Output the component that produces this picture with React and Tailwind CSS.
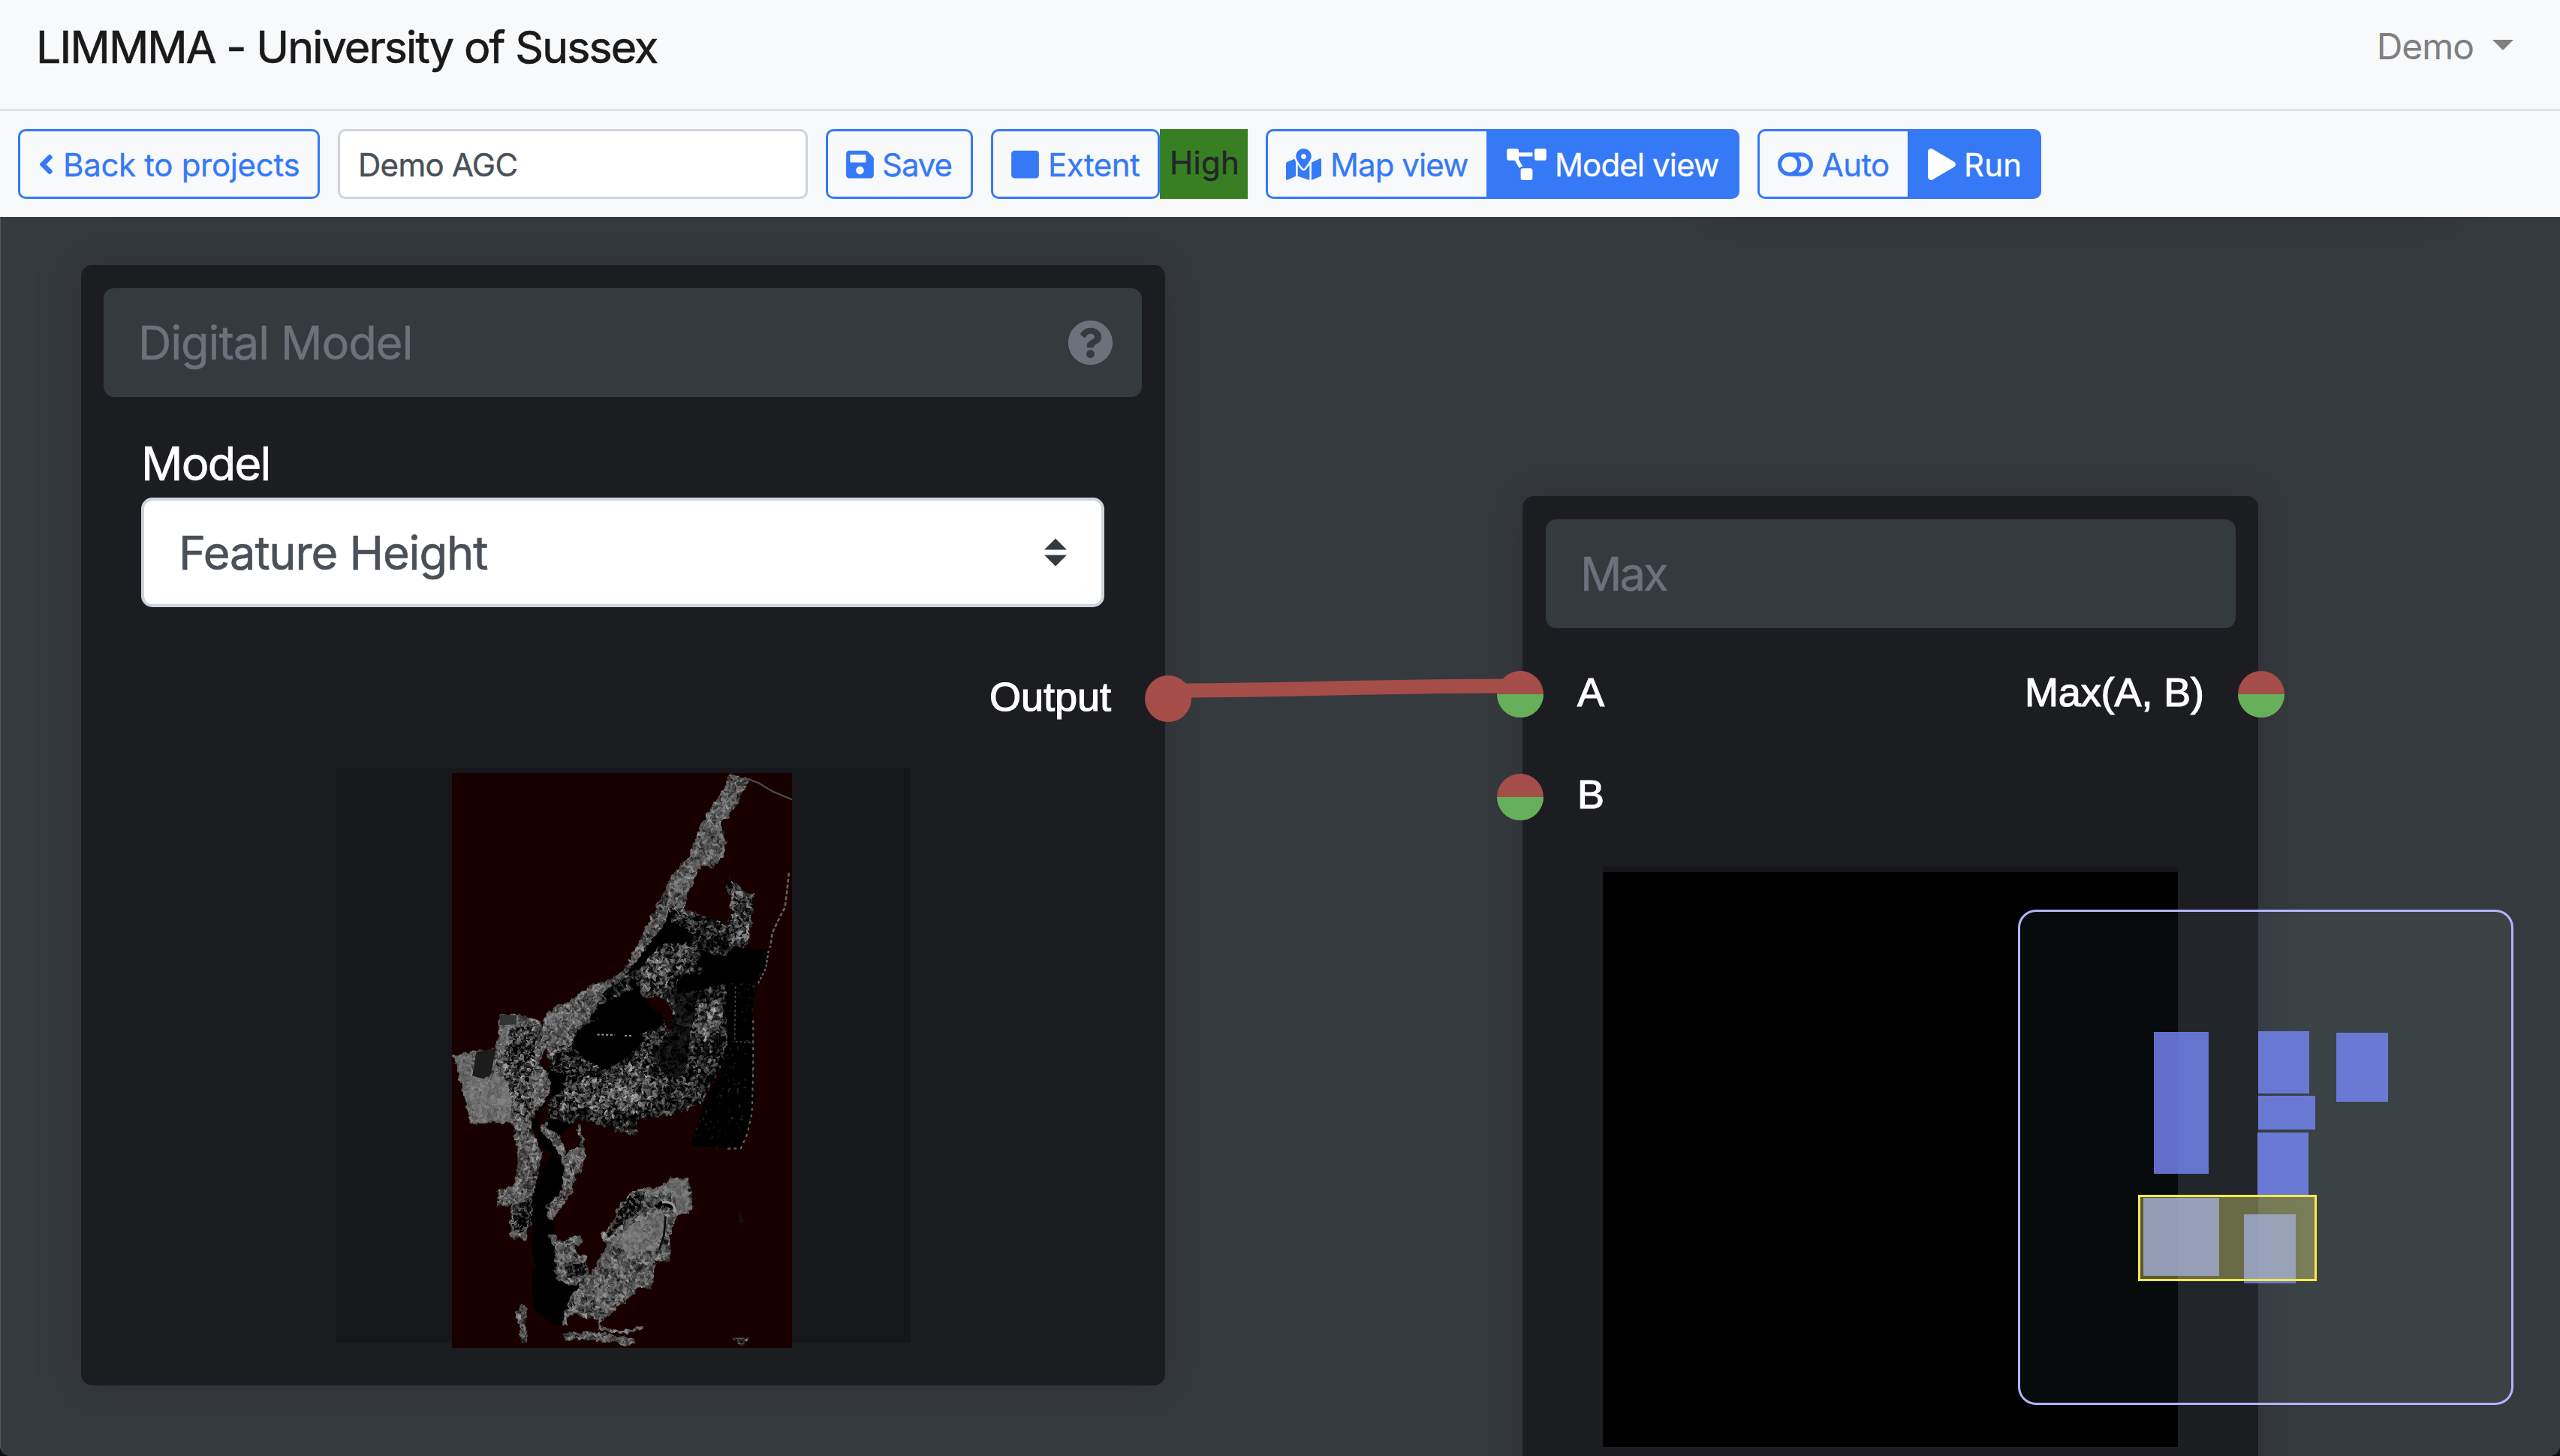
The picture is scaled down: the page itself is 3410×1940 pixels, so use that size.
import React from "react";
import {
  FaAngleLeft,
  FaSave,
  FaSquare,
  FaMapMarkedAlt,
  FaProjectDiagram,
  FaToggleOff,
  FaPlay,
  FaQuestionCircle,
} from "react-icons/fa";

function ToolButton({ icon: Icon, iconClass, filled, className, children, textClass }) {
  return (
    <button
      className={`flex h-[93px] shrink-0 items-center gap-[12px] border-[3px] border-[#3579f6] pl-[24px] text-[42px] leading-[63px] whitespace-nowrap ${
        filled ? "bg-[#3579f6] text-white" : "text-[#3579f6]"
      } ${className}`}
    >
      <Icon className={`h-[42px] shrink-0 ${iconClass}`} />
      <span className={`pt-[2px] [-webkit-text-stroke:0.3px_currentColor] ${textClass}`}>{children}</span>
    </button>
  );
}

function Socket({ split, className = "" }) {
  return (
    <span className={`flex h-[62px] w-[62px] shrink-0 flex-col overflow-hidden rounded-full bg-[#a54d49] ${className}`}>
      {split && <span className="mt-[31px] h-[31px] w-full bg-[#67b05b]" />}
    </span>
  );
}

function Node({ title, help, className, titleClass, children }) {
  return (
    <section
      className={`absolute flex flex-col rounded-[15px] bg-[#1c1d21] shadow-[0_0_50px_rgba(44,43,48,0.7)] ${className}`}
    >
      <header className="flex h-[145px] shrink-0 items-center justify-between rounded-[14px] bg-[#353a3e] pr-[38px] pl-[46px] text-[61.4px] leading-[92px] text-[#6c727b]">
        <span className={`[-webkit-text-stroke:0.5px_#6c727b] ${titleClass}`}>{title}</span>
        {help && <FaQuestionCircle className="h-[61px] w-[61px]" />}
      </header>
      {children}
    </section>
  );
}

const SOCKET_LABEL =
  "font-['Liberation_Sans',sans-serif] text-[54px] leading-[80px] text-white [-webkit-text-stroke:1.2px_white]";

const RIVER_BANKS = [
  // northern strip
  "1058,55 1108,68 1090,100 1055,160 1038,165 1040,190 1050,215 1040,255 1012,278 985,272 968,305 950,340 940,375 905,375 890,415 862,445 840,480 815,515 800,535 765,550 730,580 712,615 690,640 665,660 655,700 625,700 600,740 580,690 582,640 605,612 660,590 700,557 755,542 790,520 805,490 830,445 862,385 895,325 915,290 950,255 965,225 980,180 1015,125 1045,90",
  // western fields
  "350,722 463,704 470,650 470,625 515,627 575,640 590,700 570,740 600,770 600,810 570,850 550,880 560,920 580,955 570,1000 555,1060 552,1130 540,1120 540,1165 500,1155 500,1080 466,1082 466,1042 505,1035 520,980 515,940 502,882 400,886 372,788",
  // east bank by the bend
  "590,880 620,905 640,960 670,940 690,940 692,955 680,1000 665,1005 655,1050 625,1090 605,1112 588,1110 586,1085 610,1065 632,1040 636,990 620,950 590,925 575,900",
  "668,888 676,890 688,938 680,940",
  "600,1140 627,1165 678,1148 680,1170 665,1175 668,1195 692,1197 697,1245 670,1268 640,1270 615,1255 610,1180 596,1160",
  // south-east hill
  "905,1014 950,1016 963,1075 962,1092 922,1108 905,1150 905,1214 868,1210 858,1278 830,1275 770,1325 735,1352 700,1345 650,1338 640,1362 628,1358 650,1295 680,1262 712,1232 745,1170 728,1150 768,1115 766,1095 800,1052 830,1040 905,1042",
  // southern fragments
  "525,1312 541,1325 538,1360 542,1405 526,1407 522,1360 508,1345",
  "630,1384 700,1380 760,1386 815,1394 815,1405 795,1414 765,1404 700,1398 637,1400",
  "720,1345 730,1350 728,1368 790,1378 840,1364 838,1372 800,1385 722,1375",
];

const PASTURE = [
  "352,724 400,716 402,772 428,778 463,768 495,785 502,840 495,882 402,884 374,788",
  "480,655 512,652 505,700 475,720",
  "800,1130 880,1090 900,1110 870,1180 800,1200 770,1170",
  "910,1020 948,1020 960,1088 925,1100 915,1050 850,1055 845,1045",
];

const SUBURBS = [
  "940,375 1055,412 1058,350 1046,325 1058,300 1095,335 1120,342 1112,420 1098,468 1060,475 1045,560 1050,700 1030,760 990,835 925,862 825,878 815,917 700,880 670,875 640,890 590,870 600,830 640,800 600,760 590,700 650,640 720,570 790,535 860,440 905,375",
  "500,660 560,650 570,720 545,790 560,850 520,880 490,800 480,720",
  "515,1080 552,1060 550,1128 520,1150 502,1120",
  "805,1055 840,1045 830,1090 790,1120 740,1160 768,1115 775,1090",
  "640,1225 690,1215 690,1245 640,1255",
];

const GROVES = [
  "640,800 700,770 760,790 800,740 850,710 860,770 900,790 830,860 760,870 690,850 620,860",
  "830,520 870,470 960,460 950,500 900,550 870,585 835,580",
  "980,600 1035,590 1040,660 990,690 965,650",
  "1060,310 1115,345 1105,460 1060,450 1062,370",
  "500,660 560,650 570,720 545,790 560,850 520,880 490,800 480,720",
];

const OPEN_GROUND = [
  "1060,470 1155,472 1150,515 1125,560 1115,620 1120,700 1120,830 1105,900 1085,946 958,938 990,840 1035,760 1050,680 1042,560",
];

const TOWN = ["915,560 980,575 960,640 950,740 930,780 890,770 860,720 885,690 905,665 915,620"];

const WATER = [
  "900,395 950,430 970,440 960,458 900,458 868,470 840,505 805,530 790,530 820,500 850,460 885,425",
  "822,556 838,590 890,625 886,655 835,670 830,700 790,730 745,760 690,735 662,705 668,660 720,640 722,605 780,580",
  "985,475 1045,490 1070,465 1145,475 1130,550 1040,555 960,575 920,560 935,530 990,528 972,500",
  "575,740 620,770 640,800 600,825 570,870 572,900 610,935 636,985 632,1035 590,1085 592,1112 610,1115 612,1145 596,1150 610,1180 615,1255 650,1270 680,1262 650,1300 628,1364 608,1362 556,1322 553,1250 562,1220 552,1190 555,1060 580,980 604,960 570,930 552,885 570,850 598,820 605,790",
  "600,875 665,885 620,915 590,895",
  "862,1076 905,1068 918,1085 900,1084 870,1086",
];

const NO_DATA = ["840,590 870,583 895,592 912,618 905,665 892,650 890,625 868,618"];

function Polys({ list, ...rest }) {
  return (
    <g {...rest}>
      {list.map((p) => (
        <polygon key={p} points={p} />
      ))}
    </g>
  );
}

const CELL = 3.82;
const TILE = 84;

// Seeded cells of height values, grouped into one path for each grey level.
function heightCells(seed, mean, fine, coarse) {
  let s = seed;
  const rnd = () => {
    s = (s * 1664525 + 1013904223) % 4294967296;
    return s / 4294967296;
  };
  const half = TILE / 2;
  const sixth = TILE / 6;
  const mid = Array.from({ length: half * half }, rnd);
  const big = Array.from({ length: sixth * sixth }, rnd);
  const levels = {};
  for (let y = 0; y < TILE; y++) {
    for (let x = 0; x < TILE; x++) {
      const m = mid[(y >> 1) * half + (x >> 1)];
      const b = big[Math.floor(y / 6) * sixth + Math.floor(x / 6)];
      const v = mean + fine * (rnd() * 0.5 + m * 0.5 - 0.5) + coarse * (b - 0.5);
      const level = Math.round(Math.max(2, Math.min(225, v)) / 12) * 12;
      levels[level] = (levels[level] || "") + `M${x} ${y}h1v1h-1z`;
    }
  }
  return Object.entries(levels);
}

function Cover({ id, seed, mean, fine, coarse }) {
  return (
    <pattern id={id} width={TILE} height={TILE} patternUnits="userSpaceOnUse" patternTransform={`translate(350 53) scale(${CELL})`}>
      <rect width={TILE} height={TILE} fill="#050505" />
      {heightCells(seed, mean, fine, coarse).map(([v, d]) => (
        <path key={v} d={d} fill={`rgb(${v},${v},${v})`} shapeRendering="crispEdges" />
      ))}
    </pattern>
  );
}

function HeightRaster() {
  return (
    <svg viewBox="350 53 866 1365" preserveAspectRatio="none" className="block h-[766px] w-[453px] -translate-x-[1px] bg-[#180000]">
      <defs>
        <Cover id="canopy" seed={41} mean={88} fine={150} coarse={18} />
        <Cover id="pasture" seed={17} mean={108} fine={60} coarse={12} />
        <Cover id="suburb" seed={93} mean={25} fine={230} coarse={40} />
        <Cover id="grove" seed={58} mean={65} fine={240} coarse={45} />
        <Cover id="field" seed={71} mean={-62} fine={215} coarse={16} />
        <Cover id="town" seed={29} mean={12} fine={60} coarse={24} />
        <filter id="ragged" x="-0.02" y="-0.02" width="1.04" height="1.04">
          <feTurbulence type="fractalNoise" baseFrequency="0.07" numOctaves="2" seed="5" result="n" />
          <feDisplacementMap in="SourceGraphic" in2="n" scale="16" xChannelSelector="R" yChannelSelector="G" />
        </filter>
      </defs>
      <Polys list={OPEN_GROUND} fill="url(#field)" />
      <g filter="url(#ragged)">
        <Polys list={SUBURBS} fill="url(#suburb)" />
        <Polys list={GROVES} fill="url(#grove)" />
        <Polys list={TOWN} fill="url(#town)" />
        <Polys list={RIVER_BANKS} fill="url(#canopy)" />
        <Polys list={PASTURE} fill="url(#pasture)" />
        <Polys list={GROVES.slice(4)} fill="url(#grove)" />
        <Polys list={SUBURBS.slice(2)} fill="url(#suburb)" />
        <Polys list={WATER} fill="#020202" />
      </g>
      <Polys list={NO_DATA} fill="#180000" />
      <g fill="none" stroke="#4c4c4c" strokeWidth="4">
        <path d="M1100 66 L1130 76 L1165 96 L1216 116" />
        <path d="M1208 290 L1203 335 L1198 372 L1185 395 L1166 432 L1160 468" stroke="#606060" strokeDasharray="9 5" strokeWidth="5" />
        <path d="M1156 475 L1150 515 L1128 556" stroke="#666" strokeDasharray="6 5" />
        <path d="M1117 640 L1117 760 L1114 860 L1102 910 L1086 944 L1050 945" stroke="#666" strokeDasharray="7 9" />
        <path d="M1072 560 L1070 690 L1118 694" strokeDasharray="5 6" strokeWidth="3" />
        <path d="M720 674 L765 675 M790 677 L808 677" strokeDasharray="6 5" stroke="#888" />
      </g>
      <polygon points="402,772 412,716 463,706 448,772 425,778" fill="#1c1c1c" />
      <polygon points="472,627 515,628 514,650 471,652" fill="#333" />
      <path d="M885 1072 Q918 1068 918 1095" fill="none" stroke="#999" strokeWidth="6" />
      <path d="M894 1105 L890 1150 L878 1185" fill="none" stroke="#0a0a0a" strokeWidth="5" />
      <polygon points="1081,1090 1094,1120 1080,1122" fill="#111" />
      <polygon points="1061,1394 1107,1394 1090,1416" fill="url(#suburb)" />
    </svg>
  );
}

function RasterPreview({ children, className }) {
  return <div className={`flex h-[766px] w-[766px] shrink-0 justify-center self-center bg-[#15171a] pt-[7px] ${className}`}>{children}</div>;
}

const MINI_NODES = [
  "left-[178px] top-[160px] w-[73px] h-[189px]",
  "left-[317px] top-[159px] w-[68px] h-[83px]",
  "left-[317px] top-[245px] w-[76px] h-[45px]",
  "left-[316px] top-[294px] w-[68px] h-[83px]",
  "left-[421px] top-[161px] w-[69px] h-[92px]",
  "left-[164px] top-[381px] w-[101px] h-[104px]",
  "left-[298px] top-[403px] w-[69px] h-[92px]",
];

function MiniMap() {
  return (
    <aside className="absolute top-[923px] left-[2687px] h-[660px] w-[660px] rounded-[24px] border-[3px] border-[#b1b4fa] bg-[rgba(155,220,245,0.05)]">
      {MINI_NODES.map((c) => (
        <span key={c} className={`absolute bg-[rgba(115,132,240,0.83)] ${c}`} />
      ))}
      <span className="absolute top-[377px] left-[157px] h-[115px] w-[238px] border-[3px] border-[#fce84f] bg-[rgba(255,251,128,0.32)] bg-clip-padding" />
    </aside>
  );
}

export default function App() {
  return (
    <div className="flex h-[1940px] w-[3410px] flex-col overflow-hidden bg-[#0c130e] font-[Inter,sans-serif]">
      <nav className="h-[148px] shrink-0 border-b-[3px] border-[#e1e2e8] bg-[#f8f9fb]">
        <div className="flex h-[124px] items-center justify-between pr-[62px] pl-[48px]">
          <h1 className="pt-[2px] text-[59px] leading-[90px] tracking-[-1.87px] text-[#1a1a1a] [-webkit-text-stroke:0.7px_#1a1a1a]">
            LIMMMA - University of Sussex
          </h1>
          <div className="flex items-center gap-[25px] text-[48px] leading-[72px] tracking-[-1.06px] text-[#7f7f7f]">
            <span>Demo</span>
            <svg viewBox="0 0 28 14" className="h-[14px] w-[28px] -translate-y-[2px]" fill="currentColor">
              <path d="M0 0H28L14 14Z" />
            </svg>
          </div>
        </div>
      </nav>

      <div className="flex h-[141px] shrink-0 items-center bg-[#f8f9fb] pl-[24px]">
        <ToolButton icon={FaAngleLeft} iconClass="w-[21px]" className="w-[402px] rounded-[10px]" textClass="tracking-[-0.32px]">
          Back to projects
        </ToolButton>
        <div className="ml-[24px] flex h-[93px] w-[626px] items-center rounded-[10px] border-[3px] border-[#ced4d9] bg-white pt-[2px] pl-[24px] text-[42px] leading-[63px] tracking-[-0.71px] text-[#495057] [-webkit-text-stroke:0.4px_#495057]">
          Demo AGC
        </div>
        <ToolButton icon={FaSave} iconClass="w-[37px]" className="ml-[24px] w-[196px] rounded-[10px]" textClass="-ml-[1px] tracking-[-1.07px]">
          Save
        </ToolButton>
        <ToolButton icon={FaSquare} iconClass="w-[37px]" className="ml-[24px] w-[225px] rounded-[10px]" textClass="tracking-[-0.52px]">
          Extent
        </ToolButton>
        <div className="flex h-[93px] w-[117px] items-center bg-[#387e22] pb-[4px] pl-[13px] text-[42px] leading-[63px] tracking-[0.29px] text-[#212529] [-webkit-text-stroke:0.4px_#212529]">
          High
        </div>
        <ToolButton icon={FaMapMarkedAlt} iconClass="w-[47px]" className="ml-[24px] w-[294px] rounded-l-[10px] border-r-0" textClass="tracking-[-0.94px]">
          Map view
        </ToolButton>
        <ToolButton icon={FaProjectDiagram} iconClass="w-[53px]" filled className="w-[337px] rounded-r-[10px]" textClass="-ml-[1px] tracking-[-0.87px]">
          Model view
        </ToolButton>
        <ToolButton icon={FaToggleOff} iconClass="w-[47px]" className="ml-[24px] w-[200px] rounded-l-[10px] border-r-0" textClass="tracking-[-0.71px]">
          Auto
        </ToolButton>
        <ToolButton icon={FaPlay} iconClass="w-[37px]" filled className="w-[178px] rounded-r-[10px]" textClass="-ml-[1px] tracking-[0.2px]">
          Run
        </ToolButton>
      </div>

      <main className="relative h-[1651px] shrink-0 overflow-hidden rounded-b-[14px] border-l border-[#54595c] bg-[#353a3e]">
        {/* node scrolled above the visible area */}
        <section className="absolute -top-[306px] left-[2283px] h-[300px] w-[976px] rounded-[15px] bg-[#1c1d21] shadow-[0_0_50px_rgba(44,43,48,0.7)]" />

        <Node title="Digital Model" help titleClass="tracking-[-1.07px]" className="top-[64px] left-[107px] h-[1493px] w-[1444px] pt-[31px] pr-[31px] pl-[30px]">
          <div className="mt-[43px] flex flex-col px-[50px]">
            <label className="pt-[2px] text-[61.4px] leading-[89px] tracking-[-1.8px] text-white [-webkit-text-stroke:0.7px_white]">Model</label>
            <div className="flex h-[146px] items-center justify-between rounded-[15px] border-[4px] border-[#ced4d9] bg-white pr-[46px] pl-[46px] text-[61.4px] leading-[92px] tracking-[-1.1px] text-[#495057] [-webkit-text-stroke:0.6px_#495057]">
              <span className="pt-[1px]">Feature Height</span>
              <svg viewBox="0 0 30 38" className="h-[38px] w-[30px]" fill="#353a3e">
                <path d="M0 15.500L15 0.500L30 15.500ZM0 22.500L15 37.500L30 22.500Z" />
              </svg>
            </div>
          </div>
          <div className="mt-[79px] -mr-[66px] flex h-[80px] items-center justify-end">
            <span className={SOCKET_LABEL}>Output</span>
            <Socket className="mt-[5px] ml-[45px]" />
          </div>
          <RasterPreview className="mt-[55px]">
            <HeightRaster />
          </RasterPreview>
        </Node>

        <Node title="Max" titleClass="tracking-[-2.96px]" className="top-[372px] left-[2027px] h-[1400px] w-[980px] pt-[31px] pr-[30px] pl-[31px]">
          <div className="mt-[45px] -mr-[65px] -ml-[65px] flex h-[80px] shrink-0 items-center">
            <Socket split className="mt-[6px]" />
            <span className={`ml-[45px] ${SOCKET_LABEL}`}>A</span>
            <span className={`ml-auto tracking-[-0.1px] ${SOCKET_LABEL}`}>Max(A, B)</span>
            <Socket split className="mt-[6px] ml-[45px]" />
          </div>
          <div className="mt-[56px] -mx-[65px] flex h-[80px] shrink-0 items-center">
            <Socket split className="mt-[8px]" />
            <span className={`ml-[45px] ${SOCKET_LABEL}`}>B</span>
          </div>
          <RasterPreview className="mt-[57px] mr-[1px]">
            <div className="h-[766px] w-[766px] bg-black" />
          </RasterPreview>
        </Node>

        <svg className="pointer-events-none absolute top-[591px] left-[1549px] h-[80px] w-[480px]" viewBox="1550 880 480 80" fill="none">
          <path d="M1570 920.300C1750 919 1840 914 2015 914" stroke="#a54d49" strokeWidth="19" />
        </svg>

        <MiniMap />
      </main>
    </div>
  );
}
